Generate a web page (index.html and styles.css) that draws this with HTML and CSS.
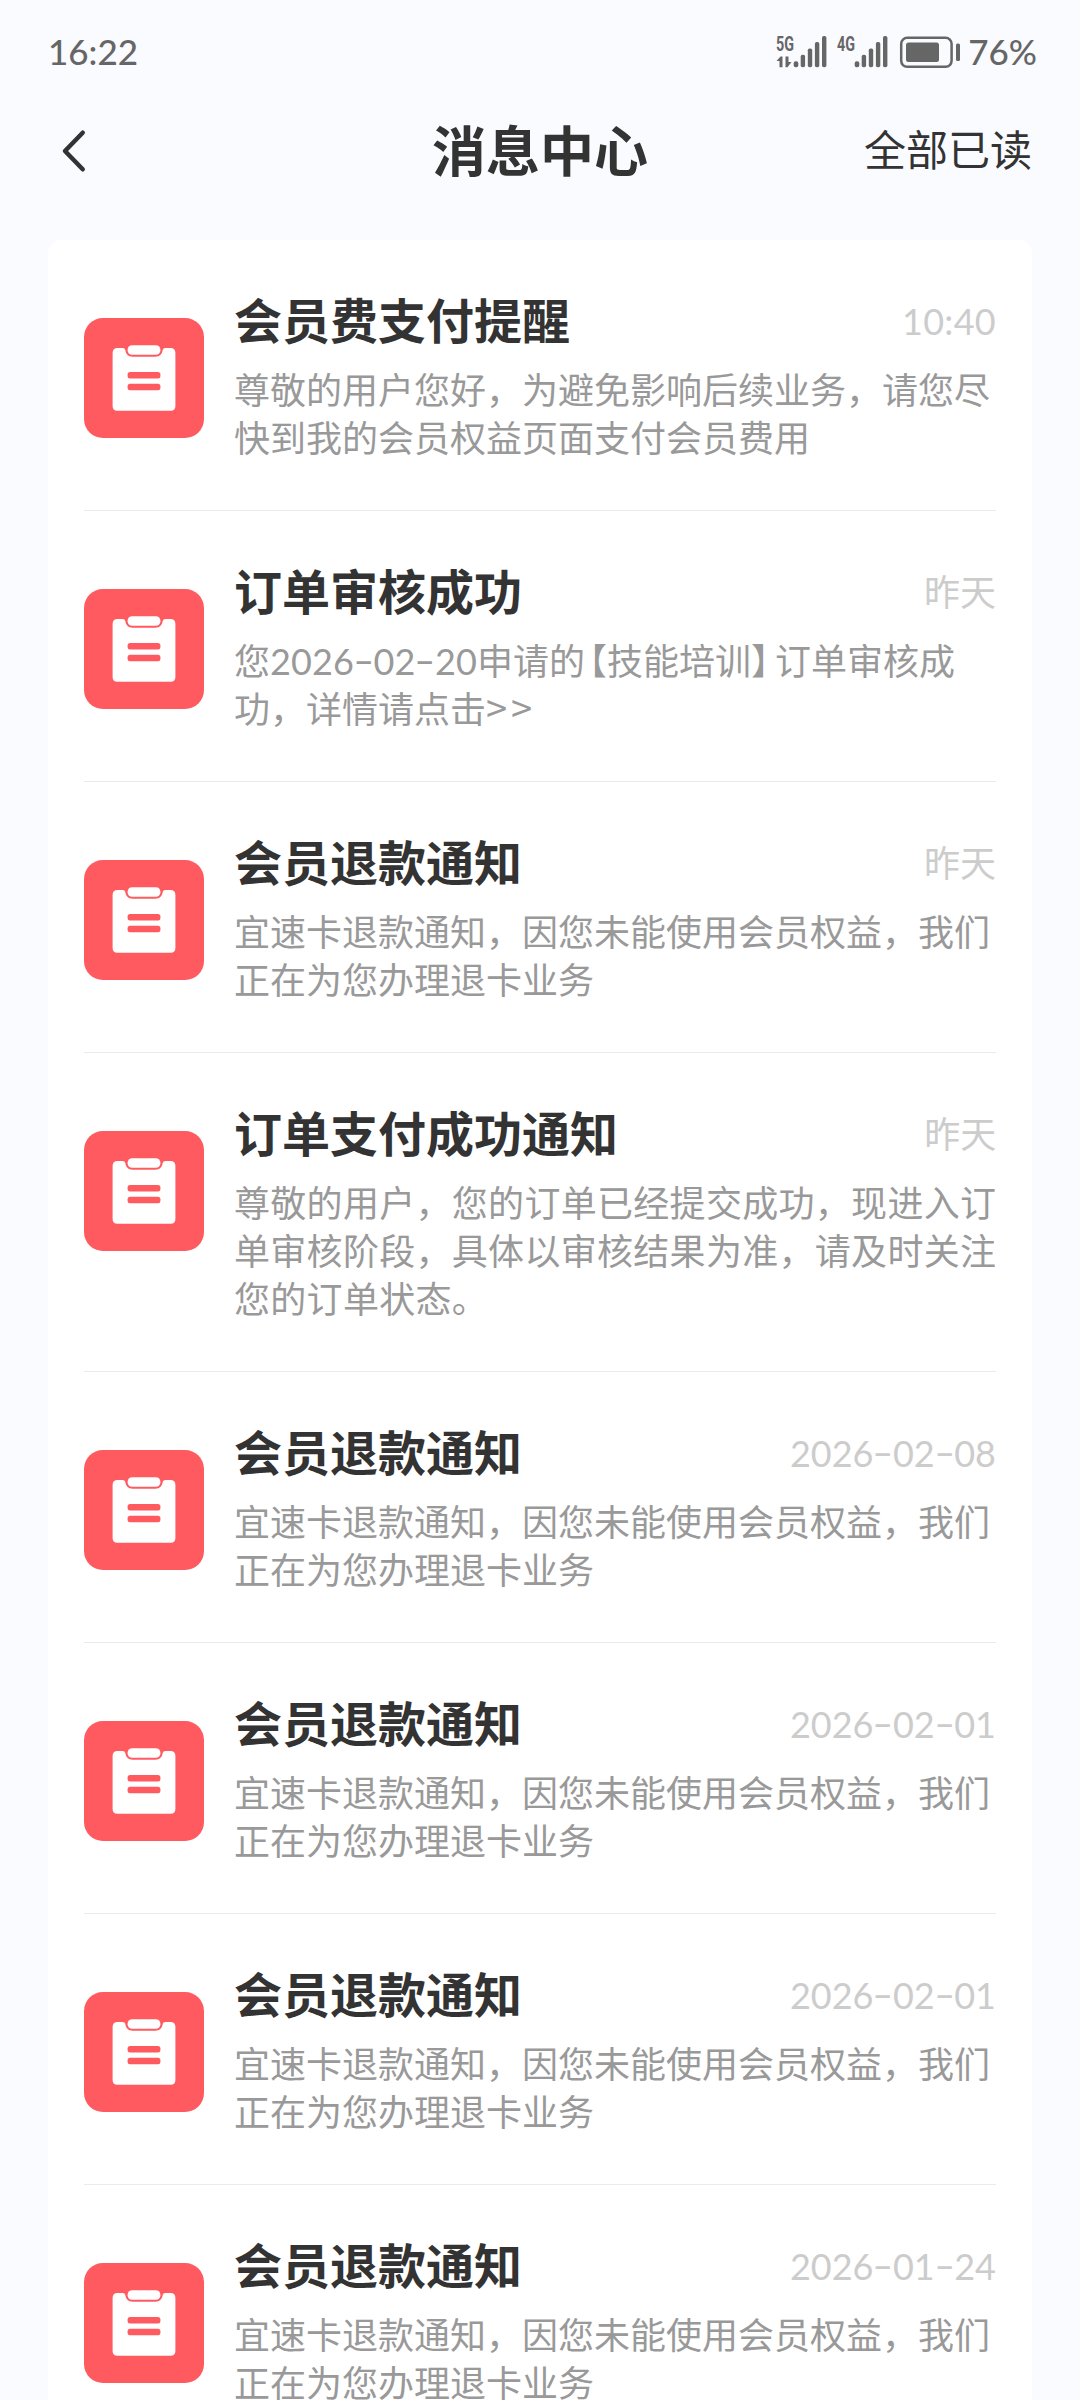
FILE: index.html
```html
<!DOCTYPE html>
<html lang="zh-CN">
<head>
<meta charset="utf-8">
<title>消息中心</title>
<link rel="stylesheet" href="styles.css">
</head>
<body>
<svg class="defs" width="0" height="0">
  <symbol id="notice" viewBox="0 0 120 120">
    <rect width="120" height="120" rx="19" fill="#ff5a5f"/>
    <path fill="#fff" d="M33.600 30H38.500Q41 30 41.300 32C42 36.500 44.500 38.700 48.500 38.700H71.500C75.500 38.700 78 36.500 78.700 32Q79 30 81.500 30H86.400Q91.400 30 91.400 35V88Q91.400 92.700 86.700 92.700H33.300Q28.600 92.700 28.600 88V35Q28.600 30 33.600 30Z"/>
    <rect x="43.600" y="27.300" width="32.800" height="9.400" rx="4.500" fill="#fff"/>
    <rect x="43.600" y="54" width="32.800" height="6.400" rx="2.500" fill="#ff5a5f"/>
    <rect x="43.600" y="65.800" width="32.800" height="6.400" rx="2.500" fill="#ff5a5f"/>
  </symbol>
</svg>
<div class="status">
  <span class="clock">16:22</span>
  <div class="status-right">
    <svg class="signals" width="190" height="40" viewBox="772 32 190 40" fill="#666">
      <text x="776" y="51" textLength="18" lengthAdjust="spacingAndGlyphs">5G</text>
      <path d="M776.500 61L780.500 56.500H782.500V67.300H779.500V61ZM785.500 56.500H788.500V62H791.500L787.500 67.300H785.500Z"/>
      <g id="bars">
        <rect x="793.700" y="61.300" width="4.600" height="6" rx="2"/>
        <rect x="800.700" y="54.700" width="4.400" height="12.600" rx="1.800"/>
        <rect x="807.800" y="48.400" width="4.400" height="18.900" rx="1.800"/>
        <rect x="814.900" y="42" width="4.400" height="25.300" rx="1.800"/>
        <rect x="822" y="36" width="4.400" height="31.300" rx="1.800"/>
      </g>
      <text x="837" y="51" textLength="18" lengthAdjust="spacingAndGlyphs">4G</text>
      <use href="#bars" x="61"/>
      <rect x="901.200" y="37.800" width="50.400" height="29" rx="6" fill="none" stroke="#666" stroke-width="2.500"/>
      <rect x="906" y="42.500" width="33" height="19.600" rx="2.500"/>
      <rect x="956" y="43.500" width="4" height="17.500" rx="1.500"/>
    </svg>
    <span class="percent">76%</span>
  </div>
</div>
<header class="header">
  <svg class="back" width="30" height="50" viewBox="0 0 30 50" fill="none" stroke="#333" stroke-width="4.500" stroke-linecap="round" stroke-linejoin="round"><path d="M22.700 6.700L5 25L22.700 43.300"/></svg>
  <h1>消息中心</h1>
  <span class="read-all">全部已读</span>
</header>
<main class="list">
  <article class="item">
    <svg class="icon"><use href="#notice"/></svg>
    <div class="body">
      <div class="top"><h2>会员费支付提醒</h2><time class="clocktime">10:40</time></div>
      <p>尊敬的用户您好，为避免影响后续业务，请您尽<br>快到我的会员权益页面支付会员费用</p>
    </div>
  </article>
  <article class="item">
    <svg class="icon"><use href="#notice"/></svg>
    <div class="body">
      <div class="top"><h2>订单审核成功</h2><time>昨天</time></div>
      <p>您<span class="num">2026<i>-</i>02<i>-</i>20</span>申请的<span class="open">【</span>技能培训<span class="close">】</span>订单审核成<br>功，详情请点击<span class="more">&gt;&gt;</span></p>
    </div>
  </article>
  <article class="item">
    <svg class="icon"><use href="#notice"/></svg>
    <div class="body">
      <div class="top"><h2>会员退款通知</h2><time>昨天</time></div>
      <p>宜速卡退款通知，因您未能使用会员权益，我们<br>正在为您办理退卡业务</p>
    </div>
  </article>
  <article class="item">
    <svg class="icon"><use href="#notice"/></svg>
    <div class="body">
      <div class="top"><h2>订单支付成功通知</h2><time>昨天</time></div>
      <p class="wide">尊敬的用户，您的订单已经提交成功，现进入订<br>单审核阶段，具体以审核结果为准，请及时关注<br>您的订单状态。</p>
    </div>
  </article>
  <article class="item">
    <svg class="icon"><use href="#notice"/></svg>
    <div class="body">
      <div class="top"><h2>会员退款通知</h2><time class="num">2026<i>-</i>02<i>-</i>08</time></div>
      <p>宜速卡退款通知，因您未能使用会员权益，我们<br>正在为您办理退卡业务</p>
    </div>
  </article>
  <article class="item">
    <svg class="icon"><use href="#notice"/></svg>
    <div class="body">
      <div class="top"><h2>会员退款通知</h2><time class="num">2026<i>-</i>02<i>-</i>01</time></div>
      <p>宜速卡退款通知，因您未能使用会员权益，我们<br>正在为您办理退卡业务</p>
    </div>
  </article>
  <article class="item">
    <svg class="icon"><use href="#notice"/></svg>
    <div class="body">
      <div class="top"><h2>会员退款通知</h2><time class="num">2026<i>-</i>02<i>-</i>01</time></div>
      <p>宜速卡退款通知，因您未能使用会员权益，我们<br>正在为您办理退卡业务</p>
    </div>
  </article>
  <article class="item">
    <svg class="icon"><use href="#notice"/></svg>
    <div class="body">
      <div class="top"><h2>会员退款通知</h2><time class="num">2026<i>-</i>01<i>-</i>24</time></div>
      <p>宜速卡退款通知，因您未能使用会员权益，我们<br>正在为您办理退卡业务</p>
    </div>
  </article>
</main>
</body>
</html>
```
FILE: styles.css
```css
* { box-sizing: border-box; margin: 0; padding: 0; }
html, body { height: 2400px; overflow: hidden; }
body {
  width: 1080px;
  background: #fafbff;
  color: #333;
  font-family: "Noto Sans CJK SC", sans-serif;
}
.defs { display: block; height: 0; }
.status {
  display: flex;
  justify-content: space-between;
  height: 104px;
  padding: 32px 43px 0 48px;
  color: #666;
  font: 500 35px/39px Lato, sans-serif;
}
.status-right { display: flex; }
.clock { line-height: 38px; }
.signals { margin-right: 6px; }
.signals text { font: 700 19.5px "Roboto", sans-serif; }
.header {
  display: grid;
  grid-template-columns: 1fr auto 1fr;
  align-items: center;
  height: 94px;
  padding: 0 48px 0 60px;
}
.header h1 { font-size: 54px; line-height: 80px; font-weight: 700; margin-left: -12px; padding-bottom: 5px; }
.read-all { justify-self: end; font-size: 42px; line-height: 60px; padding-bottom: 6px; }
.list {
  margin: 42px 48px 0;
  padding: 0 36px;
  height: 2160px;
  overflow: hidden;
  background: #fff;
  border-radius: 14px 14px 0 0;
}
.item {
  display: flex;
  gap: 30px;
  padding: 48px 0;
  border-bottom: 1px solid #eaeaea;
}
.icon { flex: none; width: 120px; height: 120px; margin-top: 30px; }
.body { flex: 1; white-space: nowrap; }
.top { display: flex; justify-content: space-between; align-items: center; height: 66px; padding-bottom: 6px; }
.top h2 { font-size: 48px; line-height: 60px; font-weight: 700; }
time { padding-top: 2px; font-size: 36px; line-height: 48px; color: #ccc; }
.clocktime, .num { font-family: Lato, sans-serif; }
.clocktime { letter-spacing: .3px; }
.top .clocktime, .top .num { padding-top: 5px; }
.num i {
  display: inline-block;
  width: 19.5px;
  line-height: 20px;
  font-style: normal;
  text-align: center;
  transform: translateY(-1px) scaleX(1.6);
}
.body p { margin-top: 10px; padding-bottom: 2px; font-size: 36px; line-height: 48px; color: #999; }
.body p.wide { letter-spacing: .3px; }
.body p .num, .more { line-height: 20px; }
.body p .num { letter-spacing: .1px; }
.open, .close { font-feature-settings: "halt"; }
.open { padding-left: 4px; }
.close { padding-right: 6px; }
.more { letter-spacing: 4px; font-size: 38px; }
```
